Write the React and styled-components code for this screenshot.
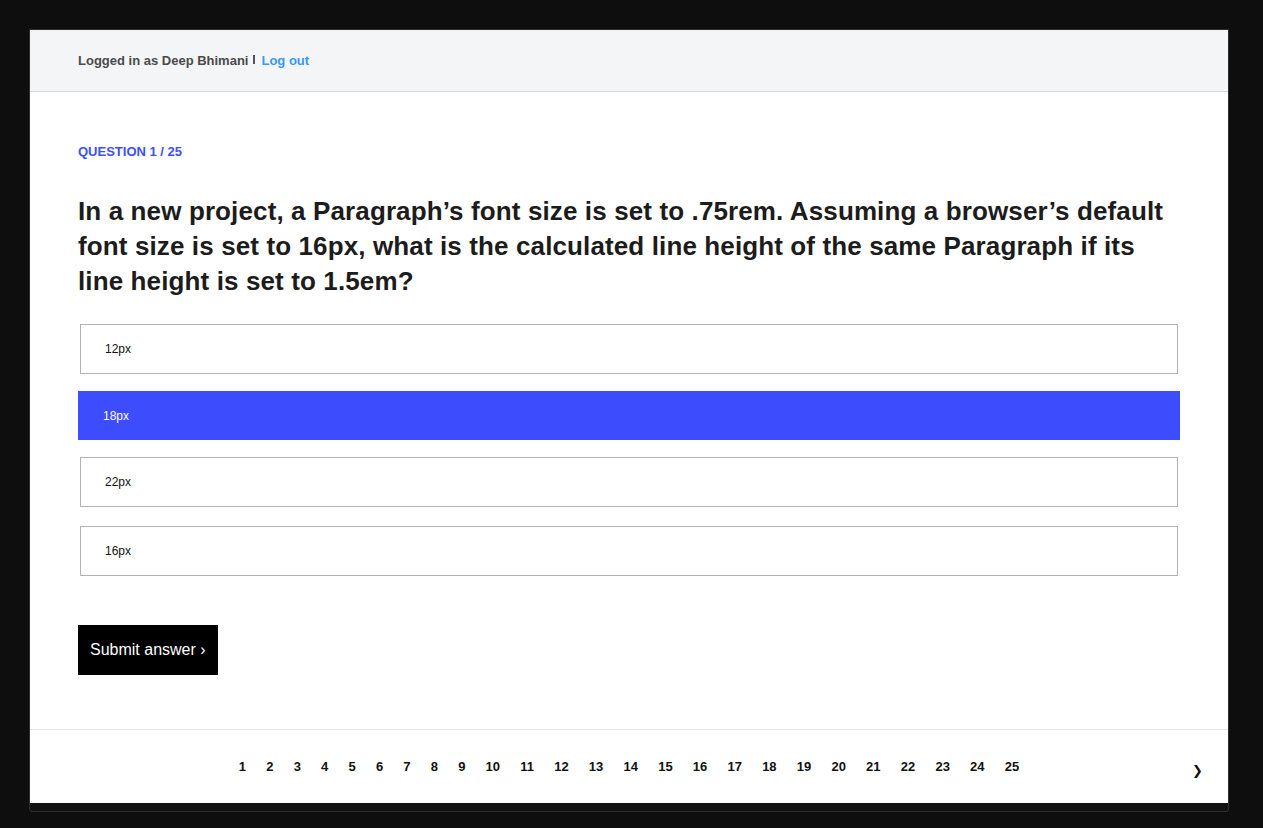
import React from "react";
import styled, { createGlobalStyle } from "styled-components";

const Global = createGlobalStyle`
  html, body { margin: 0; padding: 0; background: #0e0e0e; }
  body { font-family: "Liberation Sans", Arial, sans-serif; }
  * { box-sizing: border-box; }
`;

const Page = styled.div`
  width: 1263px;
  height: 828px;
  padding: 29px 0 0 29px;
  background: #0e0e0e;
`;

const Frame = styled.div`
  width: 1200px;
  border: 1px solid #2e2e2e;
  border-radius: 0 0 3px 3px;
  background: #111;
  padding-bottom: 8px;
  display: flex;
  flex-direction: column;
`;

const Header = styled.header`
  height: 62px;
  background: #f4f5f7;
  border-bottom: 1px solid #d9d9d9;
  display: flex;
  align-items: center;
  padding: 0 48px;
  font-size: 13px;
  font-weight: 700;
`;

const User = styled.span`
  color: #4a4a4a;
`;

const Sep = styled.span`
  display: inline-block;
  width: 2px;
  height: 9px;
  background: #555;
  margin: 0 6px 0 5px;
  position: relative;
  top: -1px;
`;

const LogOut = styled.a`
  color: #3a98f5;
  text-decoration: none;
  cursor: pointer;
`;

const Main = styled.main`
  background: #fff;
  padding: 53px 48px 54px;
  display: flex;
  flex-direction: column;
`;

const Label = styled.div`
  color: #3d4efd;
  font-size: 13px;
  font-weight: 700;
  line-height: 14px;
  text-transform: uppercase;
`;

const Question = styled.h1`
  margin: 35px 0 25px;
  font-size: 26px;
  line-height: 35px;
  font-weight: 700;
  letter-spacing: 0.12px;
  color: #1c1c1c;
  max-width: 1100px;
`;

const Options = styled.div`
  display: flex;
  flex-direction: column;
  gap: 17px;
`;

const Option = styled.div`
  height: ${(p) => (p.$selected ? "49px" : "50px")};
  margin: 0 ${(p) => (p.$selected ? "0" : "2px")};
  border: 1px solid ${(p) => (p.$selected ? "#3d4dfe" : "#b3b3b3")};
  background: ${(p) => (p.$selected ? "#3d4dfe" : "#fff")};
  color: ${(p) => (p.$selected ? "#fff" : "#111")};
  display: flex;
  align-items: center;
  padding-left: 24px;
  font-size: 12px;
  cursor: pointer;

  &:last-child {
    margin-top: 2px;
  }
`;

const Submit = styled.button`
  margin-top: 49px;
  align-self: flex-start;
  width: 140px;
  height: 50px;
  background: #000;
  color: #fff;
  border: none;
  font-family: "Liberation Sans", Arial, sans-serif;
  font-size: 16px;
  padding: 0 0 0 12px;
  text-align: left;
  cursor: pointer;
`;

const Footer = styled.footer`
  height: 74px;
  background: #fff;
  border-top: 1px solid #e3e3e3;
  display: flex;
  align-items: center;
  justify-content: center;
  position: relative;
`;

const Pages = styled.div`
  display: flex;
  gap: 20.2px;
  font-size: 13px;
  font-weight: 700;
  color: #111;
  margin-top: 0;
`;

const PageNum = styled.span`
  cursor: pointer;
`;

const Next = styled.span`
  position: absolute;
  right: 25px;
  top: 33px;
  font-size: 13px;
  font-weight: 700;
  color: #111;
  font-family: "DejaVu Sans", sans-serif;
`;

const options = ["12px", "18px", "22px", "16px"];

export default function App() {
  return (
    <Page>
      <Global />
      <Frame>
        <Header>
          <User>Logged in as Deep Bhimani</User>
          <Sep />
          <LogOut>Log out</LogOut>
        </Header>
        <Main>
          <Label>Question 1 / 25</Label>
          <Question>
            In a new project, a Paragraph’s font size is set to .75rem. Assuming a browser’s default font size is set to 16px, what is the calculated line height of the same Paragraph if its line height is set to 1.5em?
          </Question>
          <Options>
            {options.map((o, i) => (
              <Option key={o} $selected={i === 1}>
                {o}
              </Option>
            ))}
          </Options>
          <Submit>Submit answer ›</Submit>
        </Main>
        <Footer>
          <Pages>
            {Array.from({ length: 25 }, (_, i) => (
              <PageNum key={i}>{i + 1}</PageNum>
            ))}
          </Pages>
          <Next>❯</Next>
        </Footer>
      </Frame>
    </Page>
  );
}
